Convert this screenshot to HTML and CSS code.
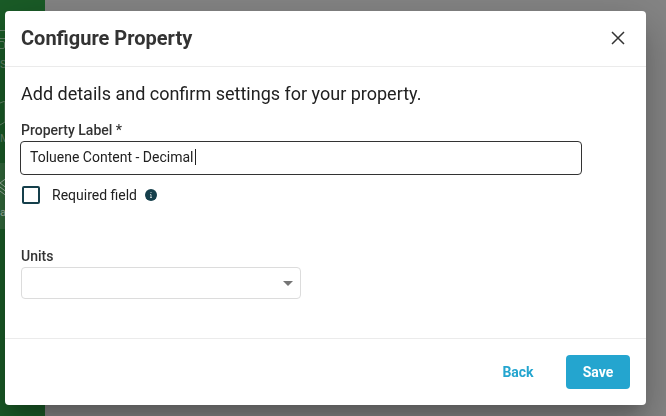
FILE: index.html
```html
<!DOCTYPE html>
<html lang="en">
<head>
	<meta charset="utf-8">
	<title>Configure Property</title>
	<link rel="stylesheet" href="styles.css">
</head>
<body>
	<!-- sidebar -->
	<nav class="sidebar">
		<a class="nav-item" href="#">
			<svg class="nav-icon" viewBox="0 0 24 32"><path d="M0 3.500H20M0 11.500H20M0 14.500H3Q4.500 14.500 4.500 16V20Q4.500 21.500 3 21.500H0"/></svg>
			<span>Si</span>
		</a>
		<a class="nav-item" href="#">
			<svg class="nav-icon" viewBox="0 0 24 32"><path d="M0 2L5 0V21L0 24"/></svg>
			<span>M</span>
		</a>
		<a class="nav-item active" href="#">
			<svg class="nav-icon" viewBox="0 0 24 32"><path d="M8 2L0 8L8 14M0 12L8 18M0 16L8 22"/></svg>
			<span>a</span>
		</a>
	</nav>

	<!-- dialog -->
	<div class="overlay">
		<form class="modal" role="dialog" aria-labelledby="modal-title">
			<header class="modal-header">
				<h1 id="modal-title">Configure Property</h1>
				<button class="close" type="button" aria-label="Close">
					<svg viewBox="0 0 14 14"><path d="M1 1L13 13M13 1L1 13"/></svg>
				</button>
			</header>
			<div class="modal-body">
				<p class="intro">Add details and confirm settings for your property.</p>
				<label class="label" for="property-label">Property Label *</label>
				<div class="text-field">
					<input id="property-label" type="text" value="Toluene Content - Decimal">
					<span class="caret"></span>
				</div>
				<div class="check-row">
					<input id="required" type="checkbox">
					<label for="required">Required field</label>
					<svg class="info" viewBox="0 0 12 12"><circle cx="6" cy="6" r="6"/><path d="M5 5.500H6V8.500M5 8.500H7M6 3V4"/></svg>
				</div>
				<label class="label" for="units">Units</label>
				<div class="select-field">
					<select id="units"><option></option></select>
					<svg class="arrow" viewBox="0 0 10 5"><path d="M0 0H10L5 5Z"/></svg>
				</div>
			</div>
			<footer class="modal-footer">
				<button class="btn btn-link" type="button">Back</button>
				<button class="btn btn-primary" type="submit">Save</button>
			</footer>
		</form>
	</div>
</body>
</html>
```
FILE: styles.css
```css
*{
	margin: 0;
	padding: 0;
	box-sizing: border-box;
}
body{
	min-height: 100vh;
	display: flex;
	overflow: hidden;
	background: #858585;
	color: #212121;
	font-family: Roboto, "Liberation Sans", sans-serif;
	font-size: 14px;
}
button,input,select{
	font: inherit;
	color: inherit;
}

.sidebar{
	width: 45px;
	padding-top: 15px;
	display: flex;
	flex-direction: column;
	gap: 8px;
	background: #1a5c27;
}
.nav-item{
	height: 66px;
	padding-top: 12px;
	overflow: hidden;
	color: #66866b;
	font-size: 11px;
	line-height: 12px;
	text-decoration: none;
}
.nav-item.active{
	background: #32693b;
	color: #a0b3a3;
}
.nav-icon{
	display: block;
	width: 24px;
	height: 32px;
	fill: none;
	stroke: currentColor;
}

.overlay{
	position: fixed;
	inset: 0;
	padding: 11px 20px 11px 5px;
}
.modal{
	height: 100%;
	display: flex;
	flex-direction: column;
	border-radius: 4px;
	background: #fff;
	box-shadow: 0 11px 15px -7px rgba(0,0,0,.2), 0 24px 38px 3px rgba(0,0,0,.14), 0 9px 46px 8px rgba(0,0,0,.12);
}
.modal-header{
	padding: 12px 16px 13px;
	display: flex;
	align-items: center;
	justify-content: space-between;
	border-bottom: 1px solid #ebebeb;
}
.modal-header h1{
	color: #333;
	font-size: 20px;
	line-height: 30px;
	font-weight: 700;
}
.close{
	width: 24px;
	height: 24px;
	display: grid;
	place-items: center;
	border: 0;
	background: none;
	cursor: pointer;
}
.close svg{
	width: 14px;
	height: 14px;
	stroke: #333;
	stroke-width: 1.5;
}

.modal-body{
	flex: 1;
	padding: 16px;
}
.intro{
	margin-bottom: 16px;
	font-size: 18px;
	line-height: 22px;
}
.label{
	display: block;
	margin-bottom: 2px;
	color: #333;
	font-weight: 500;
	line-height: 18px;
}
.text-field{
	position: relative;
	width: 562px;
	max-width: 100%;
	margin-left: -1px;
}
.text-field input{
	display: block;
	width: 100%;
	height: 34px;
	padding: 0 9px 2px;
	border: 1px solid #333;
	border-radius: 4px;
	outline: 0;
}
.caret{
	position: absolute;
	top: 8px;
	left: 175px;
	width: 1px;
	height: 16px;
	background: #212121;
}
.check-row{
	margin: 10px 0 42px;
	padding-left: 1px;
	display: flex;
	align-items: center;
	line-height: 20px;
}
.check-row input{
	appearance: none;
	width: 18px;
	height: 18px;
	border: 2px solid #153f4b;
	border-radius: 2px;
}
.check-row input:checked{
	background: #153f4b;
}
.check-row label{
	margin: 0 8px 0 12px;
}
.info{
	width: 12px;
	height: 12px;
	fill: #153f4b;
}
.info path{
	fill: none;
	stroke: #b4c3c8;
}
.select-field{
	position: relative;
	width: 280px;
}
.select-field select{
	appearance: none;
	display: block;
	width: 100%;
	height: 32px;
	padding: 0 32px 0 9px;
	border: 1px solid #dcdcdc;
	border-radius: 4px;
	background: #fff;
}
.arrow{
	position: absolute;
	top: 14px;
	right: 8px;
	width: 10px;
	height: 5px;
	fill: #757575;
	pointer-events: none;
}

.modal-footer{
	padding: 16px;
	display: flex;
	justify-content: flex-end;
	gap: 16px;
	border-top: 1px solid #ebebeb;
}
.btn{
	min-width: 64px;
	height: 34px;
	padding: 0 16px;
	border: 0;
	border-radius: 4px;
	font-weight: 700;
	cursor: pointer;
}
.btn-link{
	background: none;
	color: #24a5cf;
}
.btn-primary{
	background: #24a5cf;
	color: #fff;
}
```
